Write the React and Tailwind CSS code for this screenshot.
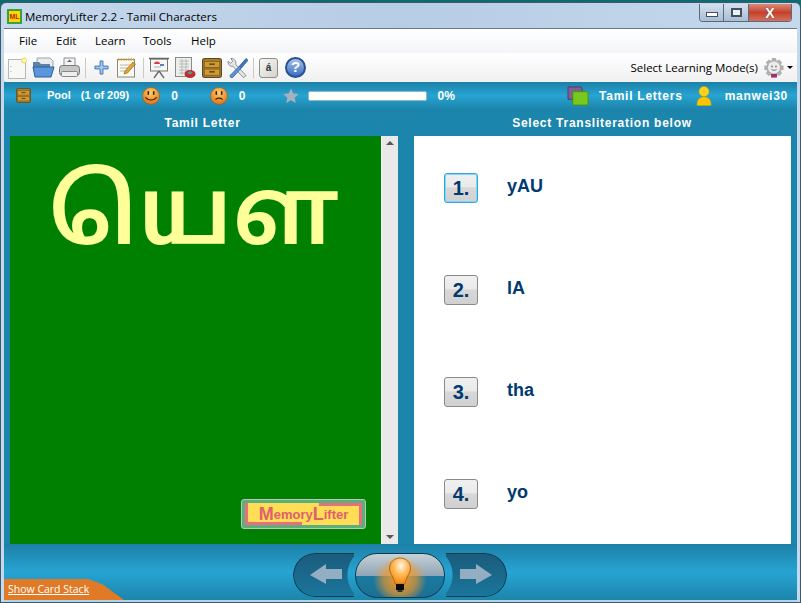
const menus = [
  { label: "File", w: "w-[37px]" },
  { label: "Edit", w: "w-[39px]" },
  { label: "Learn", w: "w-[48px]" },
  { label: "Tools", w: "w-[48px]" },
  { label: "Help", w: "w-[40px]" },
]

const answers = [
  { n: "1.", text: "yAU", focus: true },
  { n: "2.", text: "lA" },
  { n: "3.", text: "tha" },
  { n: "4.", text: "yo" },
]

function NewIcon() {
  return (
    <svg width="20" height="22" viewBox="0 0 20 22">
      <rect x="0.500" y="2.500" width="17" height="19" fill="#f8f8f4" stroke="#b4b8b8" />
      <circle cx="16" cy="3.500" r="2.500" fill="#fff6a8" stroke="#e8d860" />
      <path d="M3 9v1M3 14v1" stroke="#aaa" />
    </svg>
  )
}

function OpenIcon() {
  return (
    <svg width="23" height="21" viewBox="0 0 23 21">
      <path d="M5 1h13l3 3v8H5z" fill="#e8ecec" stroke="#9aa4aa" />
      <path d="M1 5h6l2 2h9v5H1z" fill="#5d7fa8" />
      <path d="M1 10h21l-3 10H3z" fill="#5a96dc" stroke="#2f5f9a" />
    </svg>
  )
}

function PrintIcon() {
  return (
    <svg width="21" height="21" viewBox="0 0 21 21">
      <path d="M5 1h11v8H5z" fill="#f4f4f4" stroke="#8e8e8e" />
      <path d="M8 5l2.500-2.500L13 5z" fill="#666" />
      <rect x="0.500" y="8.500" width="20" height="10" rx="3" fill="#c4c6c8" stroke="#777" />
      <rect x="2.500" y="14.500" width="16" height="5" rx="1" fill="#eee" stroke="#888" />
    </svg>
  )
}

function PlusIcon() {
  return (
    <svg width="15" height="15" viewBox="0 0 16 16">
      <path d="M6.500 1h3v5.500H15v3H9.500V15h-3V9.500H1v-3h5.500z" fill="#a9c9ec" stroke="#3a70ae" />
    </svg>
  )
}

function NoteIcon() {
  return (
    <svg width="20" height="20" viewBox="0 0 20 20">
      <rect x="0.500" y="1.500" width="17" height="17.500" fill="#fbfaf0" stroke="#8a8a80" />
      <path d="M1 1.500h16" stroke="#c89a20" strokeWidth="2" strokeDasharray="1.500 1" />
      <path d="M3 7h10M3 10h8M3 13h6" stroke="#b8b8b0" />
      <path d="M7 16l1-3 8-9 2.500 2-8 9z" fill="#e8a030" stroke="#7a5a20" strokeWidth="0.600" />
    </svg>
  )
}

function BoardIcon() {
  return (
    <svg width="20" height="22" viewBox="0 0 20 22">
      <rect x="1.500" y="2" width="17" height="12" fill="#f6f6f2" stroke="#777" />
      <path d="M0 1.500h20" stroke="#666" strokeWidth="1.500" />
      <path d="M5 7a3 2.500 0 0 1 6 0z" fill="#d84040" />
      <path d="M11 7h4v2h-4z" fill="#5a80c0" />
      <path d="M5 10h7" stroke="#b0b0b0" />
      <path d="M10 14l-5 7M10 14l5 7" stroke="#666" strokeWidth="1.300" />
    </svg>
  )
}

function TableIcon() {
  return (
    <svg width="21" height="22" viewBox="0 0 21 22">
      <rect x="0.500" y="0.500" width="16" height="19" fill="#eeeeea" stroke="#8a8a8a" />
      <path d="M4 4h10M4 7h10M4 10h10M4 13h10M4 16h10M7 2v16M11 2v16" stroke="#aab0b0" strokeWidth="0.800" />
      <ellipse cx="15" cy="17" rx="5.500" ry="4" fill="#c02c2c" />
      <path d="M12 16l3-2 3 2-3 1.500z" fill="#5a9a90" />
    </svg>
  )
}

function DrawerIcon({ size = 18 }) {
  return (
    <svg width={size} height={size} viewBox="0 0 18 18">
      <rect x="0.500" y="0.500" width="17" height="17" rx="2" fill="#a8802c" stroke="#5e4a20" />
      <rect x="2" y="3" width="14" height="5.500" fill="#d29a34" stroke="#7a5a1e" strokeWidth="0.700" />
      <rect x="2" y="10" width="14" height="5.500" fill="#d29a34" stroke="#7a5a1e" strokeWidth="0.700" />
      <path d="M6.500 5.500h5M6.500 12.500h5" stroke="#4a3412" />
    </svg>
  )
}

function ToolsIcon() {
  return (
    <svg width="21" height="22" viewBox="0 0 22 22">
      <path d="M4 1l2 3-2 2-3-2c0 4 3 6 5 5l11 12 3-2L9 7c1-3-1-6-5-6z" fill="#e4e6e8" stroke="#70767c" strokeWidth="0.800" />
      <path d="M20 1l-7 8 2 2 7-8z" fill="#3d78c4" stroke="#1e4a86" strokeWidth="0.700" />
      <path d="M13 9L3 19l1 2 2 0 9-10z" fill="#5b93d8" stroke="#1e4a86" strokeWidth="0.700" />
    </svg>
  )
}

function AccentIcon() {
  return (
    <div className="w-[19px] h-[20px] rounded-[3px] border border-[#8f8f88] bg-gradient-to-br from-[#f8f8f4] to-[#d4d4cc] flex items-center justify-center text-[10px] font-bold text-[#333] [font-family:'Liberation_Sans',sans-serif]">
      á
    </div>
  )
}

function HelpIcon() {
  return (
    <div className="w-[21px] h-[21px] rounded-full border-2 border-[#27518f] bg-gradient-to-b from-[#a8c2ea] to-[#3b6fc0] flex items-center justify-center text-[15px] font-bold text-white [font-family:'Liberation_Sans',sans-serif]">
      ?
    </div>
  )
}

function Sep() {
  return <div className="w-px h-[20px] bg-[#c8c8c4]" />
}

function Smiley({ sad }) {
  return (
    <svg width="18" height="18" viewBox="0 0 18 18">
      <defs>
        <radialGradient id={sad ? "sadFace" : "happyFace"} cx="0.5" cy="0.3" r="0.8">
          <stop offset="0" stopColor="#ffcf70" />
          <stop offset="1" stopColor="#e0640a" />
        </radialGradient>
      </defs>
      <circle cx="9" cy="9" r="8.500" fill={`url(#${sad ? "sadFace" : "happyFace"})`} stroke="#9a5a14" strokeWidth="0.600" />
      <rect x="5.500" y="4" width="1.600" height="4" rx="0.800" fill="#3c2408" />
      <rect x="10.900" y="4" width="1.600" height="4" rx="0.800" fill="#3c2408" />
      {sad ? (
        <path d="M5.500 12.500c2-1.500 5-1.500 7 0" fill="none" stroke="#3c2408" strokeWidth="1.100" />
      ) : (
        <path d="M3.500 10c2 4 9 4 11 0" fill="none" stroke="#3c2408" strokeWidth="1.100" />
      )}
    </svg>
  )
}

function GearFace() {
  return (
    <svg width="22" height="22" viewBox="0 0 22 22">
      <path d="M9 1h4l.6 3 2.600-1.400 2.800 2.800L17.600 8l3 .8v4l-3 .7 1.400 2.700-2.800 2.800-2.600-1.400-.6 3H9l-.7-3-2.600 1.400-2.800-2.800 1.400-2.700-3-.7v-4l3-.8-1.400-2.600 2.800-2.800L8.300 4z" fill="#b0b0b0" />
      <circle cx="11" cy="10.500" r="6" fill="#ececec" />
      <path d="M8 17h6v3.500H8z" fill="#a03070" />
      <circle cx="9" cy="9.500" r="0.900" fill="#777" />
      <circle cx="13" cy="9.500" r="0.900" fill="#777" />
      <path d="M8.500 12.500c1.500 1 3.500 1 5 0" stroke="#777" fill="none" />
    </svg>
  )
}

function ModuleIcon() {
  return (
    <svg width="23" height="20" viewBox="0 0 24 21">
      <path d="M1 1l14 0 1 3v10H1z" fill="#7c6292" stroke="#4f3c66" />
      <rect x="6" y="6" width="16" height="14" fill="#78c81e" stroke="#4f8e14" />
    </svg>
  )
}

function UserIcon() {
  return (
    <svg width="16" height="20" viewBox="0 0 16 20">
      <circle cx="8" cy="5.500" r="5" fill="#ffd21e" stroke="#d9a000" strokeWidth="0.500" />
      <path d="M1 19.500c-.5-6 3-8.500 7-8.500s7.500 2.500 7 8.500z" fill="#ffc400" stroke="#d9a000" strokeWidth="0.500" />
    </svg>
  )
}

function Star() {
  return (
    <svg width="16" height="16" viewBox="0 0 16 16">
      <path d="M8 .5l2.300 5 5.200.6-3.800 3.600 1 5.300L8 12.300 3.300 15l1-5.300L.5 6.100l5.200-.6z" fill="#a5b2bc" />
    </svg>
  )
}

function LeftButton() {
  return (
    <div className="w-[61px] h-[44px] pl-[16px] bg-gradient-to-b from-[#1a5c7c] to-[#1a769c] border-y border-l border-[#0f3a50] rounded-l-[22px] flex items-center [mask-image:radial-gradient(circle_30px_at_calc(100%+23px)_50%,transparent_97%,black_100%)]">
      <svg width="32" height="22" viewBox="0 0 32 22">
        <path d="M0 11L16 0v5h16v10H16v5z" fill="#93aec2" />
      </svg>
    </div>
  )
}

function RightButton() {
  return (
    <div className="w-[61px] h-[44px] pl-[14px] bg-gradient-to-b from-[#1a5c7c] to-[#1a769c] border-y border-r border-[#0f3a50] rounded-r-[22px] flex items-center [mask-image:radial-gradient(circle_30px_at_-23px_50%,transparent_97%,black_100%)]">
      <svg width="32" height="22" viewBox="0 0 32 22">
        <path d="M32 11L16 0v5H0v10h16v5z" fill="#93aec2" />
      </svg>
    </div>
  )
}

function Bulb() {
  return (
    <svg width="56" height="46" viewBox="0 0 56 46">
      <defs>
        <radialGradient id="bulbGlow" cx="0.5" cy="0.55" r="0.5">
          <stop offset="0" stopColor="#ff9a20" stopOpacity="0.95" />
          <stop offset="0.6" stopColor="#ff9a20" stopOpacity="0.6" />
          <stop offset="1" stopColor="#ff9a20" stopOpacity="0" />
        </radialGradient>
        <radialGradient id="bulbFill" cx="0.55" cy="0.3" r="0.7">
          <stop offset="0" stopColor="#fff6ea" />
          <stop offset="0.5" stopColor="#ffb955" />
          <stop offset="1" stopColor="#f58a10" />
        </radialGradient>
      </defs>
      <ellipse cx="28" cy="24" rx="27" ry="24" fill="url(#bulbGlow)" />
      <path d="M28 4c-6 0-10.500 4.500-10.500 10 0 6 4.500 8 5.500 16h10c1-8 5.500-10 5.500-16 0-5.500-4.500-10-10.500-10z" fill="url(#bulbFill)" stroke="#b86a14" />
      <rect x="24" y="30" width="8" height="6" fill="#0c0c0c" />
      <rect x="25.500" y="36" width="5" height="2" fill="#333" />
    </svg>
  )
}

function WindowButtons() {
  return (
    <div className="absolute top-[1px] right-[8px] flex h-[18px] rounded-b-[4px] border border-t-0 border-[#5a6a7c] overflow-hidden">
      <div className="w-[24px] border-r border-[#5a6a7c] bg-gradient-to-b from-[#d4e0ee] to-[#a8bdd4] flex items-center justify-center">
        <div className="w-[12px] h-[5px] mt-[4px] border border-[#45505c] bg-white" />
      </div>
      <div className="w-[25px] border-r border-[#5a6a7c] bg-gradient-to-b from-[#d4e0ee] to-[#a8bdd4] flex items-center justify-center">
        <div className="w-[11px] h-[9px] border-2 border-[#45505c] bg-[#e8f0f8]" />
      </div>
      <div className="w-[42px] bg-gradient-to-b from-[#d98a7a] via-[#c5402a] to-[#d2705c] flex items-center justify-center text-[14px] font-bold text-white leading-none [font-family:'Liberation_Sans',sans-serif] [text-shadow:0_0_1px_#333]">
        X
      </div>
    </div>
  )
}

export default function App() {
  return (
    <div className="w-[801px] h-[603px] overflow-hidden bg-[#0e6a6e] pt-[2px] [font-family:'Open_Sans',sans-serif]">
      <div className="relative h-[601px] flex flex-col rounded-t-[6px] border border-[#3d5a6c] bg-gradient-to-r from-[#c5d8ec] via-[#b7cde4] to-[#c5d8ec] px-[3px]">
        <WindowButtons />
        {/* Title bar */}
        <div className="h-[25px] pt-[2px] flex items-center pl-[3px] text-[11.5px] text-black shrink-0">
          <div className="w-[15px] h-[15px] bg-[#ffd800] border-2 border-[#3aa040] flex items-center justify-center text-[7px] font-bold text-[#c02020] leading-none [font-family:'Liberation_Sans',sans-serif]">
            ML
          </div>
          <span className="ml-[3px]">MemoryLifter 2.2 - Tamil Characters</span>
        </div>

        {/* Menu */}
        <div className="h-[25px] flex items-center pl-[15px] bg-gradient-to-b from-white to-[#f4f5f8] border-t border-[#6a7886] text-[11.5px] text-black shrink-0">
          {menus.map((m) => (
            <div key={m.label} className={m.w}>{m.label}</div>
          ))}
        </div>

        {/* Toolbar */}
        <div className="h-[29px] flex items-center pl-[4px] pr-[4px] bg-gradient-to-b from-white to-[#f0f0f0] rounded-bl-[3px] shrink-0">
          <div className="w-[24px]"><NewIcon /></div>
          <div className="w-[27px]"><OpenIcon /></div>
          <div className="w-[26px]"><PrintIcon /></div>
          <div className="w-[9px]"><Sep /></div>
          <div className="w-[23px]"><PlusIcon /></div>
          <div className="w-[26px]"><NoteIcon /></div>
          <div className="w-[6px]"><Sep /></div>
          <div className="w-[26px]"><BoardIcon /></div>
          <div className="w-[27px]"><TableIcon /></div>
          <div className="w-[25px]"><DrawerIcon size={20} /></div>
          <div className="w-[26px]"><ToolsIcon /></div>
          <div className="w-[6px]"><Sep /></div>
          <div className="w-[26px]"><AccentIcon /></div>
          <HelpIcon />
          <div className="ml-auto flex items-center text-[11.5px] text-black">
            <span className="mr-[5px]">Select Learning Mode(s)</span>
            <GearFace />
            <div className="ml-[2px] w-0 h-0 border-x-[3px] border-x-transparent border-t-[3px] border-t-black" />
          </div>
        </div>

        {/* Main blue area */}
        <div className="flex-1 min-h-0 flex flex-col bg-[#1c85ab] text-white">
          {/* Status bar */}
          <div className="h-[27px] flex items-center pl-[12px] pr-[9px] bg-gradient-to-b from-[#1c80a6] via-[#27a4d3] to-[#1c85ab] text-[11px] font-bold [font-family:'Liberation_Sans',sans-serif] shrink-0">
            <DrawerIcon size={15} />
            <span className="ml-[16px]">Pool</span>
            <span className="ml-[10px]">(1 of 209)</span>
            <div className="ml-[13px]"><Smiley /></div>
            <span className="ml-[11px] text-[12px]">0</span>
            <div className="ml-[32px]"><Smiley sad /></div>
            <span className="ml-[11px] text-[12px]">0</span>
            <div className="ml-[37px]"><Star /></div>
            <div className="ml-[9px] w-[119px] h-[10px] bg-white rounded-[2px] border border-[#8fb8cc]" />
            <span className="ml-[11px] text-[12px]">0%</span>
            <div className="ml-auto flex items-center">
              <ModuleIcon />
              <span className="ml-[9px] text-[12px] tracking-[0.75px]">Tamil Letters</span>
              <div className="ml-[13px]"><UserIcon /></div>
              <span className="ml-[13px] text-[12px] tracking-[0.75px]">manwei30</span>
            </div>
          </div>

          {/* Column captions */}
          <div className="h-[27px] flex items-center text-[12px] font-bold tracking-[0.75px] [font-family:'Liberation_Sans',sans-serif] shrink-0">
            <div className="w-[397px] text-center">Tamil Letter</div>
            <div className="flex-1 text-center pl-[6px]">Select Transliteration below</div>
          </div>

          {/* Panels */}
          <div className="h-[408px] flex pl-[6px] pr-[6px] shrink-0">
            <div className="relative w-[371px] bg-[#008000] flex justify-center">
              <div className="mr-[4px] pt-[25px] text-[94px] leading-[120px] text-[#ffff99] font-semibold whitespace-nowrap [font-family:'Noto_Sans_Tamil','Lohit_Tamil','Noto_Sans',sans-serif]">
                யௌ
              </div>
              <div className="absolute right-[15px] bottom-[15px] w-[125px] h-[30px] rounded-[3px] bg-[#5cae7c] border border-[#b8c8b8] p-[3px]">
                <div className="relative h-full bg-[#ffdd55] flex items-center justify-center text-[#e0606e] text-[13px] font-bold leading-none [font-family:'Liberation_Sans',sans-serif]">
                  <div className="absolute left-0 top-0 h-full w-[49%] border-l-[3px] border-b-[3px] border-[#e8707a]" />
                  <div className="absolute right-0 top-0 h-full w-[37%] border-r-[3px] border-t-[3px] border-[#e8707a]" />
                  <span className="text-[18px]">M</span>emory<span className="text-[18px]">L</span>ifter
                </div>
              </div>
            </div>
            <div className="w-[17px] bg-[#e9e9e9] border-l border-[#f6f6f6] flex flex-col items-center justify-between py-[5px] mr-[16px]">
              <div className="w-0 h-0 border-x-[4px] border-x-transparent border-b-[4px] border-b-[#555]" />
              <div className="w-0 h-0 border-x-[4px] border-x-transparent border-t-[4px] border-t-[#555]" />
            </div>
            <div className="flex-1 bg-white flex flex-col pl-[30px] pt-[37px] gap-[72px] [font-family:'Liberation_Sans',sans-serif]">
              {answers.map((a) => (
                <div key={a.n} className="h-[30px] flex items-center">
                  <div className={`w-[34px] h-[30px] rounded-[3px] border flex items-center justify-center text-[20px] font-bold text-[#003a70] bg-[linear-gradient(#f0f0f0_0%,#eaeaea_45%,#d8d8d8_50%,#d0d0d0_100%)] ${a.focus ? "border-[#38a5d8] shadow-[inset_0_0_0_1px_#7fd8f5]" : "border-[#8a8a8a]"}`}>
                    {a.n}
                  </div>
                  <span className="ml-[29px] -mt-[4px] text-[18px] font-bold text-[#003a70]">{a.text}</span>
                </div>
              ))}
            </div>
          </div>

          {/* Bottom nav */}
          <div className="relative flex-1 min-h-0 flex items-center justify-center pt-[6px] pr-[2px] bg-gradient-to-b from-[#1c80a6] via-[#27a4d3] to-[#1c85ab] border-b-2 border-[#b4d4e4]">
            <LeftButton />
            <div className="relative w-[90px] h-[45px] mx-[1px] rounded-[22px] border border-[#0f3a50] overflow-hidden bg-[linear-gradient(#c8d0d6_0%,#8ea6b6_50%,#1b7aa0_51%,#1b6f94_100%)] flex justify-center">
              <Bulb />
            </div>
            <RightButton />
            <div className="absolute left-0 bottom-0 h-[21px] w-[120px] bg-[#e07a26] [clip-path:polygon(0_0,70%_0,82%_25%,100%_100%,0_100%)] pl-[4px] text-[10.5px] leading-[21px] text-white underline">
              Show Card Stack
            </div>
          </div>
        </div>
      </div>
    </div>
  )
}
